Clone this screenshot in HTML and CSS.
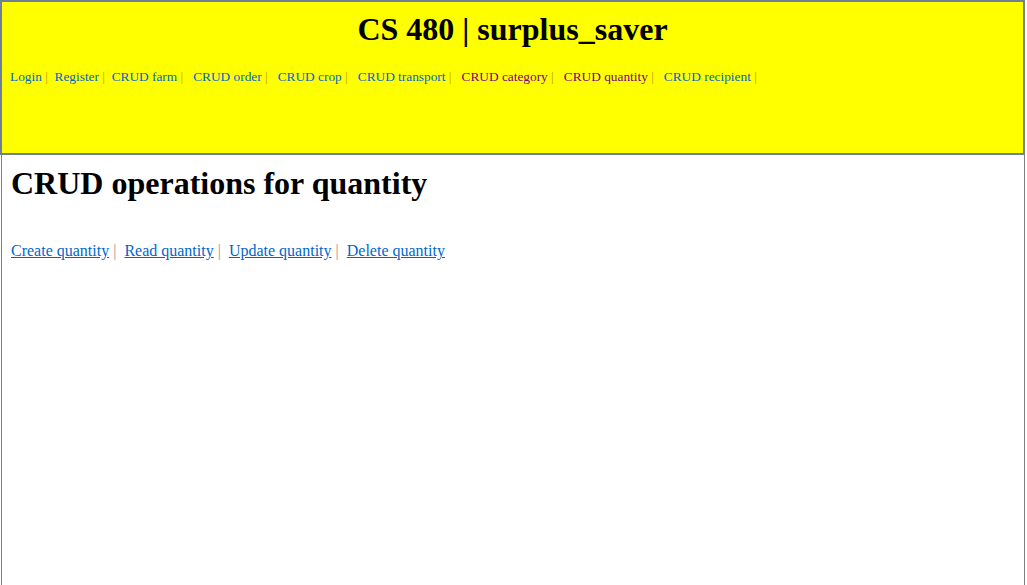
FILE: index.html
```html
<!DOCTYPE html>
<html lang="en">
<head>
<meta charset="utf-8">
<title>CS 480 | surplus_saver</title>
<link rel="stylesheet" href="styles.css">
</head>
<body>
<div class="page">
  <header class="header">
    <h1 class="title">CS 480 | surplus_saver</h1>
    <nav class="nav"><a class="nav-link" href="#">Login</a> <span class="sep">|</span> &nbsp;<a class="nav-link" href="#">Register</a> <span class="sep">|</span> &nbsp;<a class="nav-link" href="#">CRUD farm</a> <span class="sep">|</span> &nbsp; <a class="nav-link" href="#">CRUD order</a> <span class="sep">|</span> &nbsp; <a class="nav-link" href="#">CRUD crop</a> <span class="sep">|</span> &nbsp; <a class="nav-link" href="#">CRUD transport</a> <span class="sep">|</span> &nbsp; <a class="nav-link visited" href="#">CRUD category</a> <span class="sep">|</span> &nbsp; <a class="nav-link visited" href="#">CRUD quantity</a> <span class="sep">|</span> &nbsp; <a class="nav-link" href="#">CRUD recipient</a> <span class="sep">|</span></nav>
  </header>
  <main class="main">
    <h2 class="heading">CRUD operations for quantity</h2>
    <p class="actions"><a class="action-link" href="#">Create quantity</a> <span class="sep-light">|</span> &nbsp;<a class="action-link" href="#">Read quantity</a> <span class="sep-light">|</span> &nbsp;<a class="action-link" href="#">Update quantity</a> <span class="sep-light">|</span> &nbsp;<a class="action-link" href="#">Delete quantity</a></p>
  </main>
</div>
</body>
</html>
```
FILE: styles.css
```css
html, body {
  margin: 0;
  padding: 0;
  background: #ffffff;
}

body {
  font-family: "Liberation Serif", "Times New Roman", serif;
  color: #000000;
}

.page {
  display: flex;
  flex-direction: column;
  height: 585px;
  overflow: hidden;
}

.header {
  box-sizing: border-box;
  width: 1025px;
  height: 155px;
  flex: none;
  background: #ffff00;
  border: 2px solid #6d8096;
  padding: 0 8px;
}

.title {
  margin: 9px 0 0;
  font-size: 32px;
  font-weight: bold;
  text-align: center;
}

.nav {
  margin-top: 21px;
  font-size: 13.333px;
  white-space: nowrap;
}

.nav-link {
  color: #0066cc;
  text-decoration: none;
}

.nav-link.visited {
  color: #800080;
}

.sep {
  color: #c8a000;
}

.main {
  box-sizing: border-box;
  flex: 1;
  margin-left: 1px;
  width: 1024px;
  border-left: 1px solid #808080;
  border-right: 1px solid #808080;
  padding: 0 9px;
}

.heading {
  margin: 10px 0 0;
  font-size: 32px;
  font-weight: bold;
}

.actions {
  margin: 40px 0 0;
  font-size: 16px;
}

.action-link {
  color: #0066cc;
  text-decoration: underline;
}

.sep-light {
  color: #b88a8a;
}
```
